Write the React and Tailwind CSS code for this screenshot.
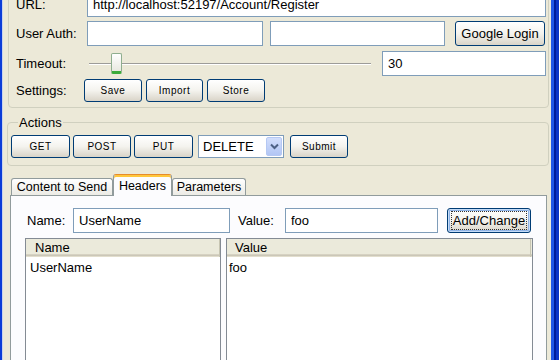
import clsx from 'clsx';

// Windows XP style push button
const XpButton = ({ className, small, focused, children }) => (
    <button
        type="button"
        className={clsx(
            'shrink-0 flex items-center justify-center rounded-[3px] border border-[#003c74] bg-linear-to-b from-white via-[#f4f3ee] to-[#d9d4c8] text-black leading-none',
            small ? 'text-[10px] tracking-[0.5px]' : 'text-[13px]',
            focused && 'shadow-[inset_0_0_0_1px_#c4dbf7,inset_0_0_0_2px_#8fb3e6]',
            className
        )}
    >
        {focused ? (
            <span className="px-[1px] py-[2px] outline outline-1 outline-dotted outline-[#333]">{children}</span>
        ) : children}
    </button>
);

const TextBox = ({ value = '', className }) => (
    <input
        readOnly
        value={value}
        className={clsx('h-full shrink-0 border border-[#7f9db9] bg-white px-[5px] text-[13px] text-black outline-none', className)}
    />
);

const Tab = ({ label, active, className }) => (
    <div
        className={clsx(
            'flex items-center justify-center rounded-t-[3px] border-x border-t border-[#919b9c] text-[12.5px] leading-none',
            active
                ? 'relative z-10 -mb-[1px] h-[22px] border-t-[#e68b2c] bg-[#fcfcfe] shadow-[inset_0_2px_0_#ffc73c] pt-[1px]'
                : 'h-[17px] bg-linear-to-b from-white to-[#ecebe5] pt-[1px]',
            className
        )}
    >
        {label}
    </div>
);

const ListHeader = ({ label, className }) => (
    <div className="flex h-[18px] shrink-0 bg-[#ebeadb] shadow-[inset_0_-1px_0_#e2decd,inset_0_-2px_0_#cbc7b8,inset_0_-3px_0_#d6d2c2]">
        <div className={clsx('flex items-center pb-[2px] text-[13px] leading-none', className)}>{label}</div>
    </div>
);

const App = () => {
    return (
        <div className="flex h-[360px] w-[559px] overflow-hidden bg-[#ece9d8] font-['Liberation_Sans',Arial,sans-serif] text-[13px] text-black">
            {/* left window frame */}
            <div className="flex w-[3px] shrink-0">
                <div className="w-[2px] bg-[#0b3cd8]" />
                <div className="w-[1px] bg-[#c9d3ee]" />
            </div>

            <div className="flex min-w-0 flex-1 flex-col">
                {/* Request group */}
                <div className="-mt-[20px] ml-[5px] mr-[2px] rounded-[4px] border border-[#d0d0bf] pt-[11px] pb-[5px] pl-[7px] pr-[2px]">
                    <div className="flex h-[25px] items-center">
                        <div className="w-[71px] shrink-0">URL:</div>
                        <TextBox value="http://localhost:52197/Account/Register" className="w-[459px]" />
                    </div>
                    <div className="mt-[4px] flex h-[25px] items-center">
                        <div className="w-[71px] shrink-0">User Auth:</div>
                        <TextBox className="w-[176px]" />
                        <TextBox className="ml-[7px] w-[175px]" />
                        <XpButton className="ml-[10px] h-[25px] w-[90px]">Google Login</XpButton>
                    </div>
                    <div className="mt-[5px] flex h-[25px] items-center">
                        <div className="w-[71px] shrink-0">Timeout:</div>
                        <div className="relative h-full w-[295px] shrink-0">
                            <div className="absolute left-[2px] top-[12px] h-[2px] w-[282px] border-t border-[#9d9c99] bg-white" />
                            <div className="absolute left-[24px] top-[2px] h-[21px] w-[11px] rounded-[2px] border border-[#8fae8f] border-b-[3px] border-b-[#3aab3a] bg-linear-to-b from-white to-[#e9e9e1]" />
                        </div>
                        <TextBox value="30" className="w-[164px]" />
                    </div>
                    <div className="mt-[3px] flex h-[23px] items-center">
                        <div className="w-[68px] shrink-0">Settings:</div>
                        <XpButton small className="h-[23px] w-[58px]">Save</XpButton>
                        <XpButton small className="ml-[4px] h-[23px] w-[57px]">Import</XpButton>
                        <XpButton small className="ml-[4px] h-[23px] w-[58px]">Store</XpButton>
                    </div>
                </div>

                {/* Actions group */}
                <fieldset className="mt-[7px] ml-[4px] mr-[2px] rounded-[4px] border border-[#d0d0bf] pt-[5px] pb-[7px] pl-[3px]">
                    <legend className="ml-[7px] px-[1px] text-[13px] leading-[15px]">Actions</legend>
                    <div className="flex h-[23px] items-center">
                        <XpButton small className="h-[23px] w-[59px]">GET</XpButton>
                        <XpButton small className="ml-[3px] h-[23px] w-[58px]">POST</XpButton>
                        <XpButton small className="ml-[3px] h-[23px] w-[59px]">PUT</XpButton>
                        <div className="ml-[5px] flex h-[23px] w-[86px] shrink-0 items-center border border-[#7f9db9] bg-white">
                            <span className="flex-1 pl-[4px] text-[13px] leading-none">DELETE</span>
                            <div className="mr-[1px] flex h-[19px] w-[16px] items-center justify-center rounded-[2px] border border-[#b5c8f3] bg-linear-to-b from-[#d2defc] to-[#b2c6f4]">
                                <svg width="9" height="7" viewBox="0 0 9 7" fill="none">
                                    <path d="M1 1.5l3.5 3.5L8 1.5" stroke="#4d6185" strokeWidth="2" />
                                </svg>
                            </div>
                        </div>
                        <XpButton small className="ml-[6px] h-[23px] w-[58px]">Submit</XpButton>
                    </div>
                </fieldset>

                {/* Tabs */}
                <div className="mt-[8px] ml-[7px] mr-[4px] flex flex-1 flex-col">
                    <div className="flex h-[21px] items-end pl-[1px]">
                        <Tab label="Content to Send" className="w-[102px]" />
                        <Tab label="Headers" active className="w-[59px]" />
                        <Tab label="Parameters" className="w-[74px]" />
                    </div>
                    <div className="flex-1 border border-[#919b9c] bg-[#fcfcfe]">
                        <div className="mt-[12px] flex h-[25px] items-center pl-[16px]">
                            <div className="w-[46px] shrink-0">Name:</div>
                            <TextBox value="UserName" className="h-[24px] w-[157px]" />
                            <div className="ml-[8px] w-[47px] shrink-0">Value:</div>
                            <TextBox value="foo" className="h-[24px] w-[153px]" />
                            <XpButton focused className="ml-[9px] h-[25px] w-[84px]">Add/Change</XpButton>
                        </div>
                        <div className="mt-[5px] flex pl-[14px]">
                            <div className="flex h-[140px] w-[196px] shrink-0 flex-col border border-[#848b94] bg-white">
                                <ListHeader label="Name" className="w-[193px] pl-[9px] shadow-[1px_0_0_#c7c5b2]" />
                                <div className="pl-[4px] pt-[3px] leading-[16px]">UserName</div>
                            </div>
                            <div className="ml-[5px] flex h-[140px] w-[307px] shrink-0 flex-col border border-[#848b94] bg-white">
                                <ListHeader label="Value" className="w-[303px] pl-[8px] shadow-[1px_0_0_#c7c5b2]" />
                                <div className="pl-[2px] pt-[3px] leading-[16px]">foo</div>
                            </div>
                        </div>
                    </div>
                </div>
            </div>

            {/* right window frame */}
            <div className="flex w-[8px] shrink-0">
                <div className="w-[3px] bg-[#2258e6]" />
                <div className="w-[2px] bg-[#001d9c]" />
                <div className="w-[3px] bg-[#0c35c8]" />
            </div>
        </div>
    );
};

export default App;
